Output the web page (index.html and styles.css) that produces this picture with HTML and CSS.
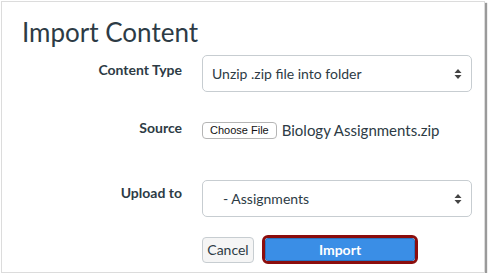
FILE: index.html
```html
<!DOCTYPE html>
<html lang="en">
<head>
    <meta charset="UTF-8">
    <title>Import Content</title>
    <link rel="stylesheet" href="styles.css">
</head>
<body>

<div class="frame">
    <h1 class="title">Import Content</h1>

    <div class="row row-type">
        <label class="label">Content Type</label>
        <div class="select">
            <span>Unzip .zip file into folder</span>
            <svg class="arrows" width="8" height="12" viewBox="0 0 8 12">
                <path d="M4 1 L7.5 5 L0.5 5 Z" fill="#444"/>
                <path d="M4 11 L7.5 7 L0.5 7 Z" fill="#444"/>
            </svg>
        </div>
    </div>

    <div class="row row-source">
        <label class="label">Source</label>
        <div class="file-row">
            <span class="file-btn">Choose File</span>
            <span class="file-name">Biology Assignments.zip</span>
        </div>
    </div>

    <div class="row row-upload">
        <label class="label">Upload to</label>
        <div class="select">
            <span class="indent">- Assignments</span>
            <svg class="arrows" width="8" height="12" viewBox="0 0 8 12">
                <path d="M4 1 L7.5 5 L0.5 5 Z" fill="#444"/>
                <path d="M4 11 L7.5 7 L0.5 7 Z" fill="#444"/>
            </svg>
        </div>
    </div>

    <div class="row row-actions">
        <div class="label"></div>
        <div class="actions">
            <button class="btn-cancel">Cancel</button>
            <div class="highlight">
                <button class="btn-import">Import</button>
            </div>
        </div>
    </div>
</div>

</body>
</html>
```

FILE: styles.css
```css
body {
    margin: 0;
    background-color: #fff;
    font-family: 'Lato', 'Liberation Sans', sans-serif;
    color: #2d3b45;
}
.frame {
    margin: 1px 0 0 1px;
    width: 482px;
    height: 270px;
    border: 1px solid #dcdcdc;
    box-shadow: 2px 2px 1px #9a9a9a;
}
.title {
    margin: 0;
    padding: 13px 0 0 20px;
    font-size: 26px;
    font-weight: 400;
    line-height: 34px;
}
.row {
    display: flex;
    align-items: flex-start;
    gap: 20px;
}
.label {
    width: 180px;
    flex-shrink: 0;
    text-align: right;
    font-size: 14px;
    font-weight: 700;
    line-height: 18px;
}
.row-type {
    margin-top: 6px;
}
.row-type .label {
    padding-top: 6px;
}
.row-source {
    margin-top: 29px;
}
.row-source .label {
    margin-top: -2px;
}
.row-upload {
    margin-top: 41px;
}
.row-upload .label {
    padding-top: 4px;
}
.row-actions {
    margin-top: 18px;
}
.select {
    width: 270px;
    box-sizing: border-box;
    height: 37px;
    border: 1px solid #c7cdd1;
    border-radius: 5px;
    display: flex;
    align-items: center;
    justify-content: space-between;
    padding: 0 9px;
    font-size: 14px;
}
.indent {
    padding-left: 11px;
}
.arrows {
    display: block;
}
.file-row {
    display: flex;
    align-items: center;
    gap: 5px;
}
.file-btn {
    font-family: 'Liberation Sans', sans-serif;
    font-size: 11px;
    color: #111;
    border: 1px solid #b5b5b5;
    border-radius: 4px;
    padding: 1px 7px;
    line-height: 13px;
    background-color: #fff;
}
.file-name {
    font-size: 15px;
}
.actions {
    display: flex;
    align-items: center;
    gap: 8px;
}
.btn-cancel {
    font-family: 'Lato', sans-serif;
    font-size: 14px;
    color: #2d3b45;
    background-color: #f5f5f5;
    border: 1px solid #c7cdd1;
    border-radius: 4px;
    width: 52px;
    height: 26px;
    padding: 0;
}
.highlight {
    border: 3px solid #8b0d0d;
    border-radius: 6px;
}
.btn-import {
    display: block;
    font-family: 'Lato', sans-serif;
    font-size: 14px;
    font-weight: 700;
    color: #fff;
    background-color: #3a8ee6;
    border: 1px solid #2a73bf;
    border-radius: 3px;
    width: 150px;
    height: 23px;
    padding: 0;
}
```
